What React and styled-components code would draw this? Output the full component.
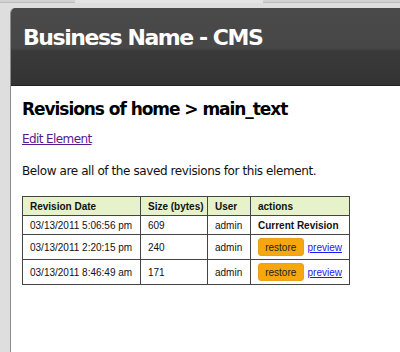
import styled, { createGlobalStyle } from "styled-components";

const GlobalStyle = createGlobalStyle`
    html, body {
        margin: 0;
        padding: 0;
        background: #dedede;
        font-family: "DejaVu Sans", Verdana, sans-serif;
    }
`;

const revisions = [
    { date: "03/13/2011 5:06:56 pm", size: "609", user: "admin", current: true },
    { date: "03/13/2011 2:20:15 pm", size: "240", user: "admin" },
    { date: "03/13/2011 8:46:49 am", size: "171", user: "admin" },
];

export default function App() {
    return (
        <>
            <GlobalStyle />
            <Page>
                <TopStrip>
                    <Tab />
                </TopStrip>
                <Panel>
                    <Header>
                        <Brand>Business Name - CMS</Brand>
                    </Header>
                    <Content>
                        <Title>Revisions of home &gt; main_text</Title>
                        <EditLink href="#">Edit Element</EditLink>
                        <Intro>Below are all of the saved revisions for this element.</Intro>
                        <Table>
                            <colgroup>
                                <col style={{ width: 118 }} />
                                <col style={{ width: 67 }} />
                                <col style={{ width: 43 }} />
                                <col style={{ width: 99 }} />
                            </colgroup>
                            <thead>
                                <tr>
                                    <Th>Revision Date</Th>
                                    <Th>Size (bytes)</Th>
                                    <Th>User</Th>
                                    <Th>actions</Th>
                                </tr>
                            </thead>
                            <tbody>
                                {revisions.map((r) => (
                                    <Row key={r.date} $tall={!r.current}>
                                        <Td>{r.date}</Td>
                                        <Td>{r.size}</Td>
                                        <Td>{r.user}</Td>
                                        <Td>
                                            {r.current ? (
                                                <Current>Current Revision</Current>
                                            ) : (
                                                <Actions>
                                                    <RestoreButton>restore</RestoreButton>
                                                    <PreviewLink href="#">preview</PreviewLink>
                                                </Actions>
                                            )}
                                        </Td>
                                    </Row>
                                ))}
                            </tbody>
                        </Table>
                    </Content>
                </Panel>
            </Page>
        </>
    );
}

const Page = styled.div`
    width: 400px;
    height: 352px;
    overflow: hidden;
    display: flex;
    flex-direction: column;
`;

const TopStrip = styled.div`
    height: 2px;
    background: #d2d2d2;
    border-bottom: 1px solid #bdbdbd;
    position: relative;
    margin-bottom: 5px;
`;

const Tab = styled.div`
    position: absolute;
    left: 75px;
    top: 0;
    width: 188px;
    height: 3px;
    background: #e4e4e4;
`;

const Panel = styled.div`
    flex: 1;
    margin-left: 10px;
    background: #fff;
    border-left: 1px solid #8c8c8c;
    border-top-left-radius: 5px;
    overflow: hidden;
`;

const Header = styled.div`
    height: 78px;
    box-sizing: border-box;
    padding: 17px 0 0 12px;
    background: linear-gradient(
        to bottom,
        #4a4a4a 0px,
        #474747 40px,
        #3a3a3a 43px,
        #333333 78px
    );
    border-bottom: 1px solid #222;
`;

const Brand = styled.h1`
    margin: 0;
    color: #fff;
    font-size: 22px;
    font-weight: bold;
    letter-spacing: -1.45px;
`;

const Content = styled.div`
    padding: 13px 0 0 11px;
`;

const Title = styled.h2`
    margin: 0 0 9px;
    font-size: 17px;
    font-weight: bold;
    color: #000;
    letter-spacing: -1.05px;
`;

const EditLink = styled.a`
    display: inline-block;
    font-size: 12px;
    letter-spacing: -0.6px;
    color: #551a8b;
    text-decoration: underline;
`;

const Intro = styled.p`
    margin: 17px 0 18px;
    font-size: 12px;
    letter-spacing: -0.4px;
    color: #111;
`;

const Table = styled.table`
    border-collapse: collapse;
    table-layout: fixed;
    width: 327px;
    border: 1px solid #444;
    font-family: "Liberation Sans", Arial, sans-serif;
    font-size: 10px;
    color: #111;
`;

const Th = styled.th`
    text-align: left;
    background: #e5f2ca;
    border: 1px solid #444;
    height: 18px;
    padding: 0 7px;
    white-space: nowrap;
    font-weight: bold;
`;

const Row = styled.tr`
    height: ${(p) => (p.$tall ? "25px" : "19px")};
`;

const Td = styled.td`
    border: 1px solid #444;
    padding: 0 7px;
    white-space: nowrap;
`;

const Current = styled.span`
    font-weight: bold;
`;

const Actions = styled.div`
    display: flex;
    align-items: center;
    gap: 4px;
`;

const RestoreButton = styled.button`
    font-family: "Liberation Sans", Arial, sans-serif;
    font-size: 10px;
    color: #222;
    background: #f5a70d;
    border: 1px solid #e8a020;
    border-radius: 3px;
    height: 18px;
    width: 47px;
    padding: 0;
`;

const PreviewLink = styled.a`
    color: #1a1aee;
    font-size: 10px;
    text-decoration: underline;
`;
